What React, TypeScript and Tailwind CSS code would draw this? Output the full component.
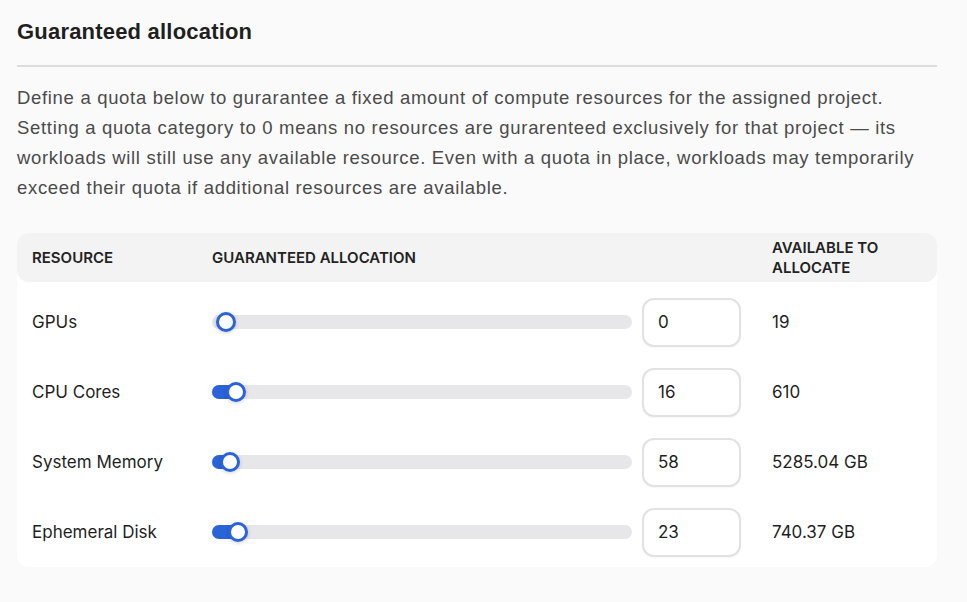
import React from "react";

type Row = { name: string; value: number; available: string; max: number };

const rows: Row[] = [
  { name: "GPUs", value: 0, available: "19", max: 19 },
  { name: "CPU Cores", value: 16, available: "610", max: 610 },
  { name: "System Memory", value: 58, available: "5285.04 GB", max: 5285.04 },
  { name: "Ephemeral Disk", value: 23, available: "740.37 GB", max: 740.37 },
];

function QuotaSlider({ value, max }: { value: number; max: number }) {
  const pct = max > 0 ? value / max : 0;
  const thumbLeft = 4 + pct * 392;
  const fill = value > 0 ? thumbLeft + 10 : 0;

  return (
    <div className="relative h-[14px] w-[420px] rounded-full bg-[#e7e7ea]">
      {fill > 0 && (
        <div
          className="absolute left-0 top-0 h-[14px] rounded-full bg-[#2b63d9]"
          style={{ width: fill }}
        />
      )}
      {/* thumb */}
      <div
        className="absolute top-[-3px] h-[20px] w-[20px] rounded-full border-[3px] border-[#2b63d9] bg-white shadow-[0_1px_4px_rgba(0,0,0,0.18)]"
        style={{ left: thumbLeft }}
      />
    </div>
  );
}

export default function App() {
  return (
    <div className="min-h-[602px] w-full bg-[#fafafa] px-[17px] pt-[18px]">
      <div className="w-[920px]">
        <h2 className="font-['Liberation_Sans',Arial,sans-serif] text-[22px] font-bold leading-[28px] tracking-[0.2px] text-[#1f1f1f]">
          Guaranteed allocation
        </h2>
        <div className="mt-[19px] h-[2px] bg-[#dcdcdc]" />

        <p className="mt-[16px] font-['Liberation_Sans',Arial,sans-serif] text-[18.5px] leading-[30px] tracking-[0.68px] text-[#4b4b4b]">
          Define a quota below to gurarantee a fixed amount of compute resources for the assigned project.
          Setting a quota category to 0 means no resources are gurarenteed exclusively for that project — its
          workloads will still use any available resource. Even with a quota in place, workloads may temporarily
          exceed their quota if additional resources are available.
        </p>

        {/* Table */}
        <div className="mt-[30px] rounded-xl bg-white font-['Inter',sans-serif]">
          <div className="flex h-[49px] items-center rounded-xl bg-[#f3f3f3] pl-[15px] text-[15px] font-semibold uppercase leading-[20px] text-[#222]">
            <div className="w-[180px]">Resource</div>
            <div className="w-[560px]">Guaranteed allocation</div>
            <div className="w-[140px]">
              Available to
              <br />
              Allocate
            </div>
          </div>

          <div className="pt-[5px]">
            {rows.map((r) => (
              <div key={r.name} className="flex h-[70px] items-center pl-[15px] text-[17px] text-[#1f1f1f]">
                <div className="w-[180px] pt-px">{r.name}</div>
                <QuotaSlider value={r.value} max={r.max} />
                <div className="ml-[10px] flex h-[49px] w-[99px] items-center rounded-xl border-2 border-[#e2e2e2] bg-white pl-[14px] pt-px shadow-[0_1px_2px_rgba(0,0,0,0.04)]">
                  {r.value}
                </div>
                <div className="ml-[31px] pt-px">{r.available}</div>
              </div>
            ))}
          </div>
        </div>
      </div>
    </div>
  );
}
